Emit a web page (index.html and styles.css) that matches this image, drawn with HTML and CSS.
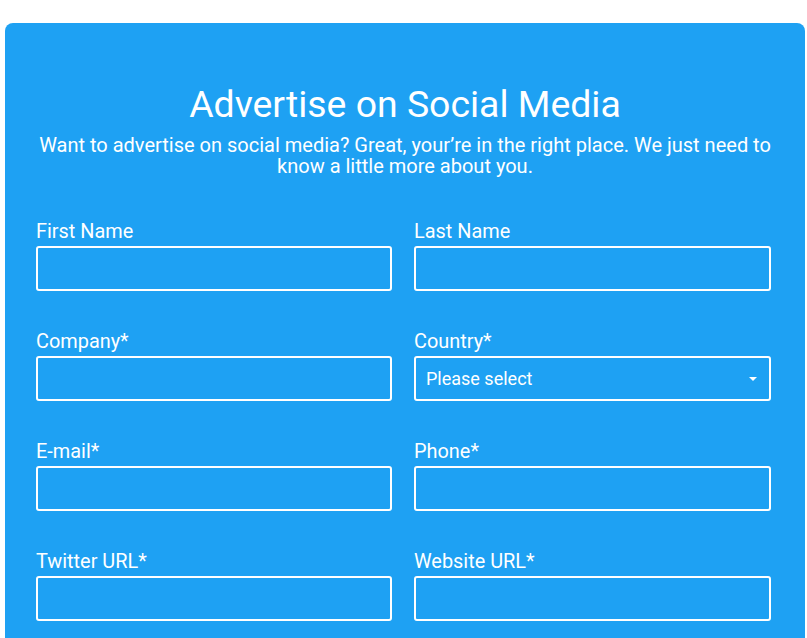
FILE: index.html
```html
<!DOCTYPE html>
<html lang="en">
<head>
<meta charset="utf-8">
<title>Advertise on Social Media</title>
<link rel="stylesheet" href="styles.css">
</head>
<body>
<div class="page">
  <section class="card">
    <header class="intro">
      <h1 class="title">Advertise on Social Media</h1>
      <p class="lead">Want to advertise on social media? Great, your’re in the right place. We just need to know a little more about you.</p>
    </header>
    <form class="form">
      <div class="field">
        <label class="label" for="fn">First Name</label>
        <input class="input" id="fn" type="text">
      </div>
      <div class="field">
        <label class="label" for="ln">Last Name</label>
        <input class="input" id="ln" type="text">
      </div>
      <div class="field">
        <label class="label" for="co">Company*</label>
        <input class="input" id="co" type="text">
      </div>
      <div class="field">
        <label class="label" for="ct">Country*</label>
        <div class="select-wrap">
          <select class="input select" id="ct">
            <option>Please select</option>
          </select>
          <span class="caret"></span>
        </div>
      </div>
      <div class="field">
        <label class="label" for="em">E-mail*</label>
        <input class="input" id="em" type="email">
      </div>
      <div class="field">
        <label class="label" for="ph">Phone*</label>
        <input class="input" id="ph" type="tel">
      </div>
      <div class="field">
        <label class="label" for="tw">Twitter URL*</label>
        <input class="input" id="tw" type="url">
      </div>
      <div class="field">
        <label class="label" for="ws">Website URL*</label>
        <input class="input" id="ws" type="url">
      </div>
    </form>
  </section>
</div>
</body>
</html>
```

FILE: styles.css
```css
* { box-sizing: border-box; }

html, body {
  margin: 0;
  padding: 0;
  background: #ffffff;
  font-family: Roboto, "Liberation Sans", Arial, sans-serif;
  color: #ffffff;
}

.page {
  padding: 23px 2px 0 5px;
  height: 638px;
  overflow: hidden;
}

.card {
  background: #1ea1f3;
  border-radius: 8px;
  padding: 60px 0 60px;
  min-height: 700px;
}

.intro {
  padding: 0 30px;
  text-align: center;
}

.title {
  margin: 0;
  font-size: 37.4px;
  line-height: 42px;
  font-weight: 400;
}

.lead {
  margin: 10px 0 0;
  font-size: 20px;
  line-height: 21px;
}

.form {
  margin: 44px 34px 0 31px;
  display: grid;
  grid-template-columns: 356px 357px;
  column-gap: 22px;
  row-gap: 40px;
}

.field {
  display: flex;
  flex-direction: column;
}

.label {
  font-size: 19.9px;
  line-height: 22px;
  margin-bottom: 3px;
}

.input {
  display: block;
  width: 100%;
  height: 45px;
  margin: 0;
  border: 2px solid #ffffff;
  border-radius: 3px;
  background: transparent;
  color: #ffffff;
  font-family: inherit;
  font-size: 18px;
  padding: 0 10px;
  outline: none;
}

.select-wrap {
  position: relative;
}

.select {
  appearance: none;
  -webkit-appearance: none;
  font-size: 18px;
  padding-left: 10px;
}

.select option {
  color: #000000;
}

.caret {
  position: absolute;
  right: 14px;
  top: 21px;
  width: 0;
  height: 0;
  border-left: 4px solid transparent;
  border-right: 4px solid transparent;
  border-top: 4px solid #ffffff;
  pointer-events: none;
}
```
